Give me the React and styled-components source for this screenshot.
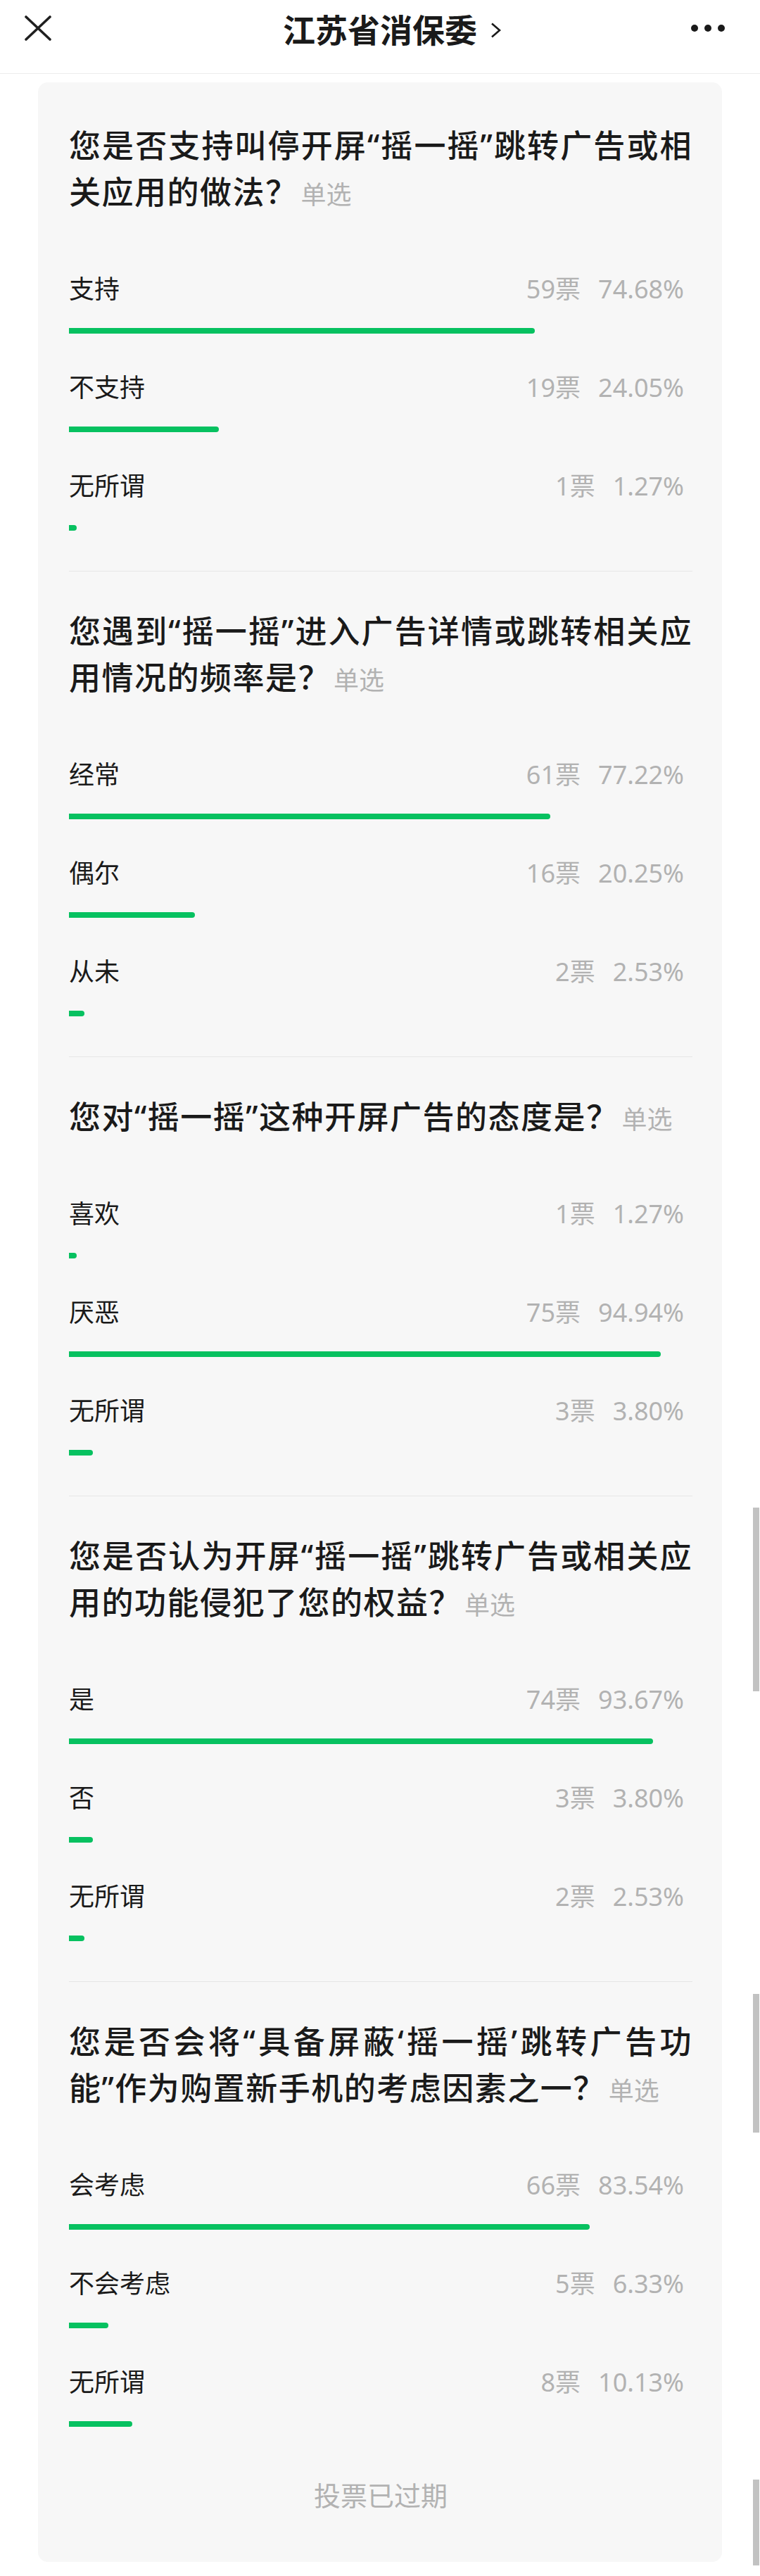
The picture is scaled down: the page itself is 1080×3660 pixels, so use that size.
import React from 'react';
import styled, { createGlobalStyle } from 'styled-components';

const Global = createGlobalStyle`
  html, body { margin: 0; padding: 0; background: #ffffff; }
  body { font-family: "Noto Sans", "Noto Sans CJK SC", sans-serif; }
  * { box-sizing: border-box; }
`;

const Page = styled.div`
  position: relative;
  width: 1080px;
  min-height: 3660px;
  background: #ffffff;
  font-family: "Noto Sans", "Noto Sans CJK SC", sans-serif;
  color: #1a1a1a;
  overflow: hidden;
`;

const Header = styled.header`
  height: 105px;
  border-bottom: 1px solid #ececec;
  display: grid;
  grid-template-columns: 200px 1fr 200px;
  align-items: center;
  padding-bottom: 25px;
`;

const CloseButton = styled.div`
  display: flex;
  align-items: center;
  padding-left: 35px;
`;

const TitleCell = styled.div`
  display: flex;
  justify-content: center;
  align-items: center;
`;

const Title = styled.h1`
  margin: 0;
  display: flex;
  align-items: center;
  gap: 19px;
  padding-left: 35px;
  font-size: 46px;
  line-height: 56px;
  font-weight: 700;
  color: #1a1a1a;
  font-family: "Noto Sans CJK SC", sans-serif;
`;

const Chevron = styled.svg`
  margin-top: 6px;
  flex: none;
`;

const MoreCell = styled.div`
  display: flex;
  justify-content: flex-end;
  align-items: center;
  gap: 9px;
  padding-right: 50px;
`;

const Dot = styled.span`
  width: 10px;
  height: 10px;
  border-radius: 50%;
  background: #1a1a1a;
`;

const Card = styled.main`
  margin: 12px 54px 0;
  background: #f7f7f7;
  border-radius: 14px;
  padding: 5px 42px 0 44px;
`;

const Section = styled.section`
  padding: 52px 0 57px;
  border-bottom: 1px solid #e6e6e6;
  &:last-of-type {
    border-bottom: none;
  }
`;

const Question = styled.h2`
  margin: 0;
  font-size: 45px;
  line-height: 66px;
  font-weight: 500;
  letter-spacing: 1.5px;
  color: #1a1a1a;
`;

const QLine = styled.span`
  display: block;
  height: 66px;
  ${(p) => (p.$justify ? 'text-align: justify; text-align-last: justify;' : '')}
`;

const Tag = styled.span`
  margin-left: 4px;
  font-size: 36px;
  font-weight: 400;
  letter-spacing: 0;
  color: #b2b2b2;
`;

const Options = styled.div`
  margin-top: 80px;
  display: flex;
  flex-direction: column;
  gap: 52px;
`;

const Option = styled.div`
  display: flex;
  flex-direction: column;
`;

const OptionHead = styled.div`
  height: 50px;
  display: flex;
  justify-content: space-between;
  align-items: center;
  font-size: 36px;
  line-height: 50px;
`;

const Label = styled.span`
  color: #1a1a1a;
`;

const Stats = styled.span`
  display: flex;
  gap: 25px;
  padding-right: 12px;
  color: #b2b2b2;
`;

const Track = styled.div`
  margin-top: 30px;
  height: 8px;
`;

const Fill = styled.div`
  height: 8px;
  background: #07c160;
  border-radius: 0 4px 4px 0;
`;

const Footer = styled.footer`
  padding: 15px 0 70px;
  text-align: center;
  font-size: 38px;
  line-height: 50px;
  height: 135px;
  color: #b2b2b2;
`;

const ScrollMark = styled.div`
  position: absolute;
  left: 1070px;
  width: 9px;
  top: ${(p) => p.$top}px;
  height: ${(p) => p.$height}px;
  background: #c2c2c2;
`;

const polls = [
  {
    lines: ['您是否支持叫停开屏“摇一摇”跳转广告或相', '关应用的做法？'],
    options: [
      ['支持', 59, '74.68'],
      ['不支持', 19, '24.05'],
      ['无所谓', 1, '1.27'],
    ],
  },
  {
    lines: ['您遇到“摇一摇”进入广告详情或跳转相关应', '用情况的频率是？'],
    options: [
      ['经常', 61, '77.22'],
      ['偶尔', 16, '20.25'],
      ['从未', 2, '2.53'],
    ],
  },
  {
    lines: ['您对“摇一摇”这种开屏广告的态度是？'],
    options: [
      ['喜欢', 1, '1.27'],
      ['厌恶', 75, '94.94'],
      ['无所谓', 3, '3.80'],
    ],
  },
  {
    lines: ['您是否认为开屏“摇一摇”跳转广告或相关应', '用的功能侵犯了您的权益？'],
    options: [
      ['是', 74, '93.67'],
      ['否', 3, '3.80'],
      ['无所谓', 2, '2.53'],
    ],
  },
  {
    lines: ['您是否会将“具备屏蔽‘摇一摇’跳转广告功', '能”作为购置新手机的考虑因素之一？'],
    options: [
      ['会考虑', 66, '83.54'],
      ['不会考虑', 5, '6.33'],
      ['无所谓', 8, '10.13'],
    ],
  },
];

function Poll({ poll }) {
  const last = poll.lines.length - 1;
  return (
    <Section>
      <Question>
        {poll.lines.map((line, i) => (
          <QLine key={i} $justify={i < last}>
            {line}
            {i === last && <Tag>单选</Tag>}
          </QLine>
        ))}
      </Question>
      <Options>
        {poll.options.map(([label, votes, pct]) => (
          <Option key={label}>
            <OptionHead>
              <Label>{label}</Label>
              <Stats>
                <span>{votes}票</span>
                <span>{pct}%</span>
              </Stats>
            </OptionHead>
            <Track>
              <Fill style={{ width: `${pct}%` }} />
            </Track>
          </Option>
        ))}
      </Options>
    </Section>
  );
}

export default function App() {
  return (
    <Page>
      <Global />
      <Header>
        <CloseButton>
          <svg width="38" height="36" viewBox="0 0 38 36">
            <path d="M2 2 L36 34 M36 2 L2 34" stroke="#1f1f1f" strokeWidth="3.6" strokeLinecap="round" fill="none" />
          </svg>
        </CloseButton>
        <TitleCell>
          <Title>
            江苏省消保委
            <Chevron width="16" height="22" viewBox="0 0 16 22">
              <polyline points="2,1.5 13,11 2,20.5" stroke="#1a1a1a" strokeWidth="2.6" fill="none" strokeLinejoin="miter" />
            </Chevron>
          </Title>
        </TitleCell>
        <MoreCell>
          <Dot />
          <Dot />
          <Dot />
        </MoreCell>
      </Header>
      <Card>
        {polls.map((p, i) => (
          <Poll key={i} poll={p} />
        ))}
        <Footer>投票已过期</Footer>
      </Card>
      <ScrollMark $top={2142} $height={261} />
      <ScrollMark $top={2833} $height={197} />
      <ScrollMark $top={3523} $height={122} />
    </Page>
  );
}
